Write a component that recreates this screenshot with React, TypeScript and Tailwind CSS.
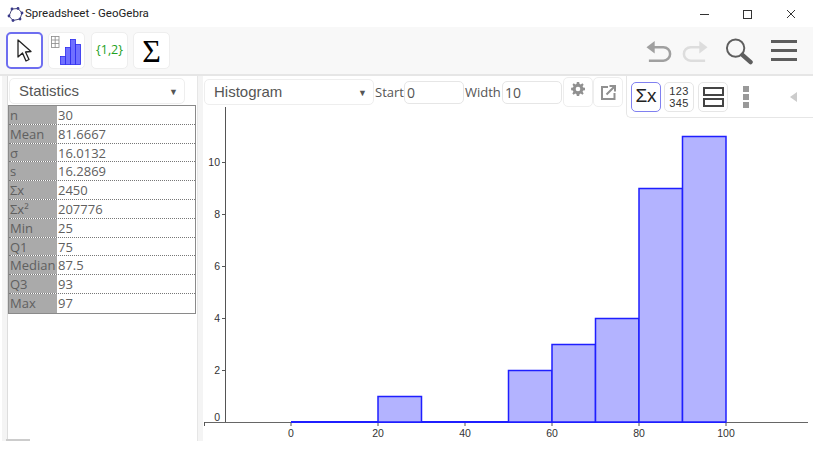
import React from "react";

const stats = [
  ["n", "30"],
  ["Mean", "81.6667"],
  ["σ", "16.0132"],
  ["s", "16.2869"],
  ["Σx", "2450"],
  ["Σx²", "207776"],
  ["Min", "25"],
  ["Q1", "75"],
  ["Median", "87.5"],
  ["Q3", "93"],
  ["Max", "97"],
];

// histogram classes: [from, to, count]
const bars = [
  [20, 30, 1],
  [50, 60, 2],
  [60, 70, 3],
  [70, 80, 4],
  [80, 90, 9],
  [90, 100, 11],
];

const px = (v: number) => 291 + v * 4.35;
const py = (v: number) => 422.5 - v * 26;

const ToolButton = ({ active, children }: { active?: boolean; children: React.ReactNode }) => (
  <div
    className={`flex h-[37px] w-[37px] items-center justify-center rounded-[5px] bg-white ${
      active ? "border-2 border-[#6e6ef0]" : "border border-[#eeeeee]"
    }`}
  >
    {children}
  </div>
);

const Caret = () => <span className="text-[9px] leading-none text-[#555555]">▼</span>;

const Histogram = () => (
  <svg width="610" height="334" viewBox="203 107 610 334" className="block">
    {/* axes */}
    <line x1="225.5" y1="107" x2="225.5" y2="423" stroke="#555555" />
    <line x1="204" y1="422.5" x2="808" y2="422.5" stroke="#666666" />
    {[2, 4, 6, 8, 10].map((v) => (
      <g key={v}>
        <line x1="222" y1={py(v)} x2="225" y2={py(v)} stroke="#555555" />
        <text x="220" y={py(v) + 3} textAnchor="end" fontSize="10.5" fill="#333333" fontFamily="Liberation Sans, sans-serif">
          {v}
        </text>
      </g>
    ))}
    <text x="220" y="421" textAnchor="end" fontSize="10.5" fill="#333333" fontFamily="Liberation Sans, sans-serif">
      0
    </text>
    {[0, 20, 40, 60, 80, 100].map((v) => (
      <g key={v}>
        <line x1={px(v)} y1="423" x2={px(v)} y2="426" stroke="#555555" />
        <text x={px(v)} y="437" textAnchor="middle" fontSize="10.5" fill="#333333" fontFamily="Liberation Sans, sans-serif">
          {v}
        </text>
      </g>
    ))}
    <line x1="204.5" y1="422" x2="204.5" y2="426" stroke="#555555" />
    {/* baseline of the empty classes */}
    <line x1={px(0)} y1="422" x2={px(100)} y2="422" stroke="#1f1fff" strokeWidth="2" />
    {bars.map(([a, b, c]) => (
      <rect
        key={a}
        x={px(a)}
        y={py(c)}
        width={px(b) - px(a)}
        height={422 - py(c)}
        fill="#b3b3ff"
        stroke="#1f1fff"
        strokeWidth="1.5"
      />
    ))}
  </svg>
);

export default function App() {
  return (
    <div className="flex h-[452px] w-[813px] flex-col overflow-hidden bg-white font-['Open_Sans',sans-serif]">
      {/* Title bar */}
      <div className="flex h-[27px] items-center pl-[7px] pt-[1px]">
        <svg width="17" height="15" viewBox="0 0 17 15">
          <path d="M5 2 L11 1.5 L15 6 L13 12 L6 13.5 L2 9 Z" fill="none" stroke="#4a4a7a" strokeWidth="1" />
          {[[5, 2], [11, 1.5], [15, 6], [13, 12], [6, 13.5], [2, 9]].map(([x, y]) => (
            <circle key={x} cx={x} cy={y} r="1.4" fill="#3a3a8a" />
          ))}
        </svg>
        <span className="ml-[1px] font-['Roboto',sans-serif] text-[11.5px] text-[#222222]">Spreadsheet - GeoGebra</span>
        <div className="ml-auto flex items-center gap-[34px] pr-[17px]">
          <div className="h-[1px] w-[9px] bg-[#333333]" />
          <div className="h-[9px] w-[9px] border border-[#333333]" />
          <svg width="10" height="10" viewBox="0 0 10 10">
            <path d="M1 1 L9 9 M9 1 L1 9" stroke="#333333" />
          </svg>
        </div>
      </div>

      {/* Main toolbar */}
      <div className="flex h-[49px] items-center justify-between border-b-2 border-[#e6e6e6] bg-[#f8f8f8] pl-[6px] pr-[16px]">
        <div className="flex">
          <ToolButton active>
            <svg width="18" height="26" viewBox="0 0 18 26">
              <path d="M2 2 L2 19 L6.5 15 L10 23 L13 21.5 L9.5 14 L15 13.5 Z" fill="white" stroke="#222222" strokeWidth="1.3" strokeLinejoin="round" />
            </svg>
          </ToolButton>
          <div className="ml-[5px]">
            <ToolButton>
              <svg width="33" height="31" viewBox="0 0 33 31">
                <g stroke="#888888" fill="none" strokeWidth="0.8">
                  <rect x="1.5" y="1.5" width="7.5" height="11" />
                  <path d="M1.5 5 H9 M1.5 8.5 H9 M5.2 1.5 V12.5" />
                </g>
                <g fill="#7070ff" stroke="#2a2aee" strokeWidth="0.8">
                  <rect x="10.5" y="21.5" width="5" height="8" />
                  <rect x="15.5" y="12.5" width="5" height="17" />
                  <rect x="20.5" y="4.5" width="5" height="25" />
                  <rect x="25.5" y="9.5" width="5" height="20" />
                </g>
              </svg>
            </ToolButton>
          </div>
          <div className="ml-[6px]">
            <ToolButton>
              <span className="text-[12.5px] leading-none text-[#22a022]">{"{1,2}"}</span>
            </ToolButton>
          </div>
          <div className="ml-[5px]">
            <ToolButton>
              <span className="font-['Liberation_Serif',serif] text-[32px] leading-none text-black">Σ</span>
            </ToolButton>
          </div>
        </div>
        <div className="flex items-center">
          <svg width="27" height="24" viewBox="0 0 28 24">
            <path d="M3 8 H18 A7 7 0 0 1 18 22 H3" fill="none" stroke="#a0a0a0" strokeWidth="2.6" />
            <path d="M0.5 8 L9 1.5 V14.5 Z" fill="#a0a0a0" />
          </svg>
          <svg width="27" height="24" viewBox="0 0 28 24" className="ml-[8px]">
            <path d="M25 8 H10 A7 7 0 0 0 10 22 H25" fill="none" stroke="#dddddd" strokeWidth="2.6" />
            <path d="M27.5 8 L19 1.5 V14.5 Z" fill="#dddddd" />
          </svg>
          <svg width="28" height="28" viewBox="0 0 29 28" className="ml-[17px]">
            <circle cx="11" cy="11" r="9" fill="none" stroke="#5e5e5e" strokeWidth="2" />
            <path d="M18 18 L26.5 25.5" stroke="#5e5e5e" strokeWidth="4.5" strokeLinecap="round" />
          </svg>
          <div className="ml-[18px] flex w-[26px] flex-col gap-[6px]">
            <div className="h-[3px] bg-[#5e5e5e]" />
            <div className="h-[3px] bg-[#5e5e5e]" />
            <div className="h-[3px] bg-[#5e5e5e]" />
          </div>
        </div>
      </div>

      <div className="relative flex h-[365px] shrink-0">
        {/* Left edge strip */}
        <div className="ml-[2px] w-[6px] shrink-0 border-r border-[#dddddd] bg-[#f4f4f4]" />

        {/* Statistics panel */}
        <div className="w-[189px] shrink-0">
          <div className="ml-[1px] mt-[2px] flex h-[26px] w-[176px] items-center justify-between rounded-[5px] border border-[#eeeeee] pl-[9px] pr-[6px]">
            <span className="font-['Liberation_Sans',sans-serif] text-[15px] text-[#555555]">Statistics</span>
            <Caret />
          </div>
          <div className="mt-[1px] w-[188px] border border-[#8a8a8a] text-[13px] leading-[18px] text-[#606060]">
            {stats.map(([k, v], i) => (
              <div key={k} className={`flex h-[18.8px] ${i < stats.length - 1 ? "border-b border-dotted border-[#777777]" : ""}`}>
                <div className="w-[48px] shrink-0 overflow-visible whitespace-nowrap bg-[#aaaaaa] pl-[1px]">{k}</div>
                <div className="pl-[1px]">{v}</div>
              </div>
            ))}
          </div>
        </div>

        {/* Divider */}
        <div className="w-[6px] shrink-0 border-l border-[#e6e6e6] bg-[#f4f4f4]" />

        {/* Data analysis view */}
        <div className="relative min-w-0 flex-1">
          <div className="flex items-start pl-[1px]">
            <div className="mt-[3px] flex h-[26px] w-[170px] items-center justify-between rounded-[5px] border border-[#eeeeee] pl-[9px] pr-[6px]">
              <span className="font-['Liberation_Sans',sans-serif] text-[15px] text-[#555555]">Histogram</span>
              <Caret />
            </div>
            <span className="mt-[7px] w-[30px] pl-[1px] text-[13px] leading-[18px] text-[#555555]">Start</span>
            <div className="mt-[5px] h-[23px] w-[60px] rounded-[5px] border border-[#e6e6e6] pl-[2px] text-[14px] leading-[21px] text-[#555555]">0</div>
            <span className="mt-[7px] w-[38px] pl-[1px] text-[13px] leading-[18px] text-[#555555]">Width</span>
            <div className="mt-[5px] h-[23px] w-[60px] rounded-[5px] border border-[#e6e6e6] pl-[2px] text-[14px] leading-[21px] text-[#555555]">10</div>
            <div className="ml-[1px] mt-[1px] flex h-[30px] w-[30px] items-start justify-center rounded-[5px] border border-[#eeeeee] pt-[4px]">
              <svg width="14" height="14" viewBox="0 0 24 24">
                <path
                  fill="#909090"
                  fillRule="evenodd"
                  d="M10 0h4l.6 3.2 2.2.9L19.5 2.3l2.2 2.2-1.8 2.7.9 2.2 3.2.6v4l-3.2.6-.9 2.2 1.8 2.7-2.2 2.2-2.7-1.8-2.2.9L14 24h-4l-.6-3.2-2.2-.9-2.7 1.8-2.2-2.2 1.8-2.7-.9-2.2L.2 14v-4l3.2-.6.9-2.2L2.5 4.5l2.2-2.2 2.7 1.8 2.2-.9zM12 8a4 4 0 1 0 0 8 4 4 0 0 0 0-8z"
                />
              </svg>
            </div>
            <div className="mt-[1px] flex h-[30px] w-[30px] items-center justify-center rounded-[5px] border border-[#eeeeee]">
              <svg width="15" height="15" viewBox="0 0 15 15">
                <path d="M7 2 H1 V14 H13.5 V8" fill="none" stroke="#909090" strokeWidth="2" />
                <path d="M5.5 9.5 L13 2 M8.5 1 H14 V6.5" fill="none" stroke="#909090" strokeWidth="2" />
              </svg>
            </div>
          </div>

          {/* Stats style bar lies over the chart */}
          <div className="absolute left-[423px] top-0 flex h-[42px] w-[187px] items-center rounded-bl-[5px] border-b border-l border-[#e6e6e6] bg-white pl-[4px]">
            <div className="flex h-[30px] w-[30px] items-center justify-center rounded-[5px] border border-[#8080f0] font-['Liberation_Sans',sans-serif] text-[19px] text-[#222222]">
              Σx
            </div>
            <div className="ml-[3px] flex h-[30px] w-[30px] flex-col items-center justify-center rounded-[5px] border border-[#e6e6e6] font-['Liberation_Sans',sans-serif] text-[11px] leading-[12px] text-[#333333]">
              <div className="tracking-[0.3px]">123</div>
              <div className="tracking-[0.3px]">345</div>
            </div>
            <div className="ml-[4px] flex h-[30px] w-[30px] items-center justify-center rounded-[5px] border border-[#e6e6e6]">
              <div className="flex w-[21px] flex-col gap-[2px]">
                <div className="h-[9px] border-2 border-[#444444]" />
                <div className="h-[9px] border-2 border-[#444444]" />
              </div>
            </div>
            <div className="ml-[15px] flex flex-col gap-[2px]">
              <div className="h-[6px] w-[6px] bg-[#999999]" />
              <div className="h-[6px] w-[6px] bg-[#999999]" />
              <div className="h-[6px] w-[6px] bg-[#999999]" />
            </div>
            <div className="ml-[41px] h-0 w-0 border-y-[5px] border-r-[7px] border-y-transparent border-r-[#cccccc]" />
          </div>

          <Histogram />
        </div>

        {/* Scroll handle at the panel's foot */}
        <div className="absolute bottom-0 left-[6px] h-[2px] w-[24px] bg-[#cccccc]" />
      </div>
    </div>
  );
}
